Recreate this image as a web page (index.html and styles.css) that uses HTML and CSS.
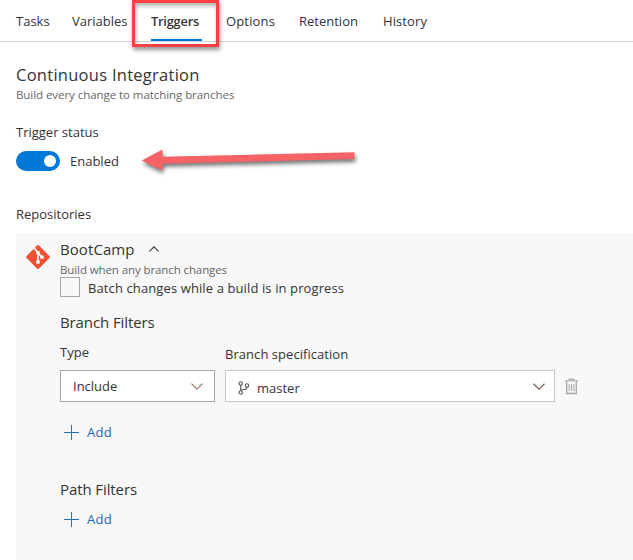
FILE: index.html
```html
<!DOCTYPE html>
<html lang="en">
<head>
<meta charset="utf-8">
<title>Triggers</title>
<link rel="stylesheet" href="styles.css">
</head>
<body>
<nav class="tabs">
  <a class="tab tasks">Tasks</a>
  <a class="tab variables">Variables</a>
  <a class="tab triggers active">Triggers</a>
  <a class="tab options">Options</a>
  <a class="tab retention">Retention</a>
  <a class="tab history">History</a>
  <span class="highlight"></span>
</nav>
<main>
  <h1 class="heading title">Continuous Integration</h1>
  <p class="hint">Build every change to matching branches</p>
  <p class="status-label">Trigger status</p>
  <div class="status">
    <span class="toggle"><span class="knob"></span></span>
    <span class="enabled">Enabled</span>
    <svg class="arrow" width="230" height="40" viewBox="0 0 230 40"><path d="M6.700 20.500 27.500 9.500V16.800L219.500 12.300V19L27.500 23.800V30.500Z" fill="#f56367"/></svg>
  </div>
  <p class="repos-label">Repositories</p>
  <section class="panel">
    <svg class="git" width="24" height="24" viewBox="0 0 24 24"><rect x="3.200" y="3.200" width="17.600" height="17.600" rx="1.500" transform="rotate(45 12 12)" fill="#f05133"/><path d="M8.300 3.300 12 7.300V17M12 8.200 15.800 12" fill="none" stroke="#f8f8f8" stroke-width="1.700"/><g fill="#f8f8f8"><circle cx="12" cy="7.700" r="1.900"/><circle cx="12" cy="17" r="2"/><circle cx="16" cy="12.200" r="1.900"/></g></svg>
    <div class="repo">
      <div class="repo-head">
        <h2 class="heading bootcamp">BootCamp</h2>
        <svg width="10" height="6" viewBox="0 0 10 6"><path d="M.5 5.300 5 .8 9.500 5.300" fill="none" stroke="#333" stroke-width="1.100"/></svg>
      </div>
      <p class="hint repo-hint">Build when any branch changes</p>
      <div class="check-row"><span class="checkbox"></span><span class="check-label">Batch changes while a build is in progress</span></div>
      <h3 class="heading branch-title">Branch Filters</h3>
      <div class="filters">
        <div class="type-field">
          <p class="type-label">Type</p>
          <div class="select"><span class="include">Include</span>
            <svg class="chevron" width="12" height="7" viewBox="0 0 12 7"><path d="M.5.7 6 6.100 11.500.7" fill="none" stroke="#8c6a55" stroke-width="1.100"/></svg></div>
        </div>
        <div class="spec-field">
          <p class="spec-label">Branch specification</p>
          <div class="select spec">
            <svg class="branch" width="12" height="14" viewBox="0 0 12 14"><g fill="none" stroke="#555" stroke-width="1.100"><circle cx="2.700" cy="2.500" r="1.700"/><circle cx="9" cy="4.500" r="1.700"/><circle cx="2.700" cy="11.500" r="1.700"/><path d="M2.700 4.200V9.800M9 6.200C9 8.500 7 8.500 5 8.500 3.500 8.500 2.700 9 2.700 9.800"/></g></svg>
            <span class="master">master</span>
            <svg class="chevron" width="12" height="7" viewBox="0 0 12 7"><path d="M.5.7 6 6.100 11.500.7" fill="none" stroke="#7a6255" stroke-width="1.300"/></svg></div>
        </div>
        <svg class="trash" width="13" height="17" viewBox="0 0 13 17"><path d="M4 2.500V1H9V2.500" fill="#ccc" stroke="#a6a6a6"/><path d="M0 3H13" stroke="#a6a6a6" stroke-width="1.400"/><path d="M1.700 3.500V15.500H11.300V3.500" fill="#f8f8f8" stroke="#a6a6a6" stroke-width="1.300"/><path d="M4.200 6V13M6.500 6V13M8.800 6V13" stroke="#aaa" stroke-width="1.100"/></svg>
      </div>
      <div class="add"><svg width="15" height="15" viewBox="0 0 15 15"><path d="M7.500 0V15M0 7.500H15" stroke="#1c74c4"/></svg><span>Add</span></div>
      <h3 class="heading path-title">Path Filters</h3>
      <div class="add path-add"><svg width="15" height="15" viewBox="0 0 15 15"><path d="M7.500 0V15M0 7.500H15" stroke="#1c74c4"/></svg><span>Add</span></div>
    </div>
  </section>
</main>
</body>
</html>
```
FILE: styles.css
```css
* { box-sizing: border-box; }
body { margin: 0; height: 560px; overflow: hidden; background: #fff; color: #333; font: 13px/20px "Open Sans", sans-serif; }
p, h1, h2, h3 { margin: 0; font-weight: 400; white-space: nowrap; }
svg { display: block; flex: none; }
.tabs { position: relative; display: flex; gap: 24px; height: 42px; padding-left: 16px; border-bottom: 1px solid #d2d2d2; line-height: 42px; }
.tab { height: 41px; white-space: nowrap; }
.tasks { width: 32px; }
.variables { width: 55px; }
.triggers { width: 51px; }
.options { width: 49px; letter-spacing: .15px; }
.retention { width: 60px; }
.history { width: 44px; letter-spacing: .1px; }
.active { font-weight: 600; border-bottom: 2px solid #0078d7; letter-spacing: -.2px; font-size: 12.800px; }
.highlight { position: absolute; left: 132px; top: 0; width: 87px; height: 47px; border: 3px solid #fb4044; box-shadow: 1px 3px 4px rgba(0,0,0,.4), inset 1px 3px 4px rgba(0,0,0,.3); }
main { padding: 21px 0 0 16px; }
.heading { font-size: 15px; line-height: 24px; letter-spacing: -.1px; }
.title { font-size: 16.500px; letter-spacing: .27px; }
.bootcamp { letter-spacing: .08px; }
.hint { font-size: 11.500px; line-height: 16px; color: #666; letter-spacing: -.06px; }
.status-label { margin-top: 19px; }
.status { position: relative; display: flex; align-items: center; gap: 10px; height: 20px; margin-top: 9px; }
.toggle { display: flex; justify-content: flex-end; align-items: center; width: 44px; height: 20px; padding-right: 4px; border-radius: 10px; background: #0078d7; }
.knob { width: 12px; height: 12px; border-radius: 50%; background: #fff; }
.arrow { position: absolute; left: 119px; top: -11px; filter: drop-shadow(1px 3px 2px rgba(0,0,0,.55)); }
.repos-label { margin-top: 33px; }
.panel { display: flex; gap: 10px; height: 327px; margin-top: 9px; padding: 4px 0 0 10px; background: #f8f8f8; }
.git { margin-top: 8px; }
.repo { flex: 1; }
.repo-head { display: flex; align-items: center; gap: 14px; }
.repo-hint { margin-top: 1px; letter-spacing: -.1px; }
.check-row { display: flex; align-items: center; gap: 8px; height: 20px; margin-top: -1px; }
.check-label { position: relative; top: 1px; white-space: nowrap; letter-spacing: .11px; }
.checkbox { width: 20px; height: 20px; border: 1px solid #a6a6a6; background: #f8f8f8; }
.branch-title { margin-top: 13px; }
.filters { display: flex; align-items: flex-end; gap: 10px; height: 68px; }
.type-field { width: 155px; }
.type-label { margin-bottom: 8px; }
.spec-field { width: 330px; }
.spec-label { margin-bottom: 6px; letter-spacing: .05px; }
.select { display: flex; align-items: center; height: 32px; padding: 0 11px 0 12px; border: 1px solid #a6a6a6; background: #fff; }
.chevron { margin-left: auto; }
.spec { padding: 0 9px 0 12px; border-color: #c8c8c8; }
.master { margin: 4px 0 0 7px; }
.branch { margin-top: 4px; }
.trash { margin-bottom: 7px; }
.add { display: flex; align-items: center; gap: 8px; height: 20px; margin-top: 20px; padding-left: 4px; color: #1968b3; letter-spacing: .3px; }
.path-title { margin-top: 35px; }
.path-add { margin-top: 8px; }
```
